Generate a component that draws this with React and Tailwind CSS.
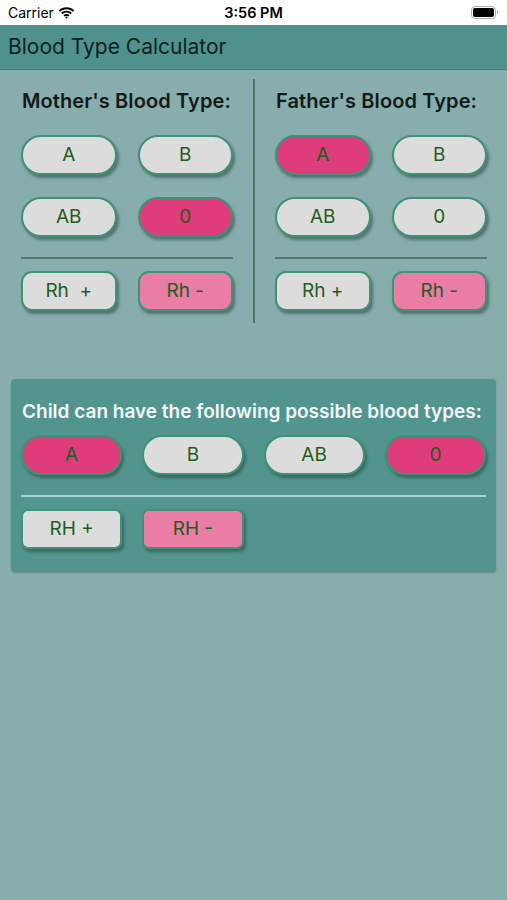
import React, { useState } from 'react';

const font = { fontFamily: 'Inter, "Liberation Sans", Arial, sans-serif' };

const Pill = ({ label, active, onClick, shape = 'pill', tone = 'strong' }) => {
  const radius = shape === 'pill' ? 'rounded-full' : shape === 'rh' ? 'rounded-[11px]' : 'rounded-[7px]';
  const bg = active ? (tone === 'strong' ? 'bg-[#de3c7b]' : 'bg-[#e97da6]') : 'bg-[#dcdcdc]';
  return (
    <button
      onClick={onClick}
      className={`h-10 w-full ${radius} ${bg} border-2 border-[#3f9274] text-[19px] text-[#1f5c1d] shadow-[2px_3px_3px_rgba(40,70,60,0.55)] flex items-center justify-center whitespace-pre`}
    >
      {label}
    </button>
  );
};

const ParentColumn = ({ title, blood, setBlood, rh, setRh, rhLabels }) => (
  <div className="w-[212px] flex flex-col">
    <div className="h-[65px] pt-[16px] text-[20px] font-semibold text-[#141a1a] whitespace-nowrap pl-[1px] tracking-[0.1px]">{title}</div>
    <div className="grid grid-cols-2 gap-x-[21px] gap-y-[22px]">
      {['A', 'B', 'AB', '0'].map((t) => (
        <Pill key={t} label={t} active={blood === t} onClick={() => setBlood(t)} />
      ))}
    </div>
    <div className="h-[2px] bg-[#4d7d6d] mt-5 mb-3" />
    <div className="grid grid-cols-2 gap-x-[21px]">
      <Pill label={rhLabels[0]} shape="rh" tone="light" active={rh === '+'} onClick={() => setRh('+')} />
      <Pill label={rhLabels[1]} shape="rh" tone="light" active={rh === '-'} onClick={() => setRh('-')} />
    </div>
  </div>
);

const App = () => {
  const [mother, setMother] = useState('0');
  const [father, setFather] = useState('A');
  const [motherRh, setMotherRh] = useState('-');
  const [fatherRh, setFatherRh] = useState('-');

  const childTypes = ['A', 'B', 'AB', '0'];
  const childActive = { A: true, B: false, AB: false, 0: true };

  return (
    <div style={font} className="w-[507px] h-[900px] bg-[#87adad] flex flex-col">
      {/* status bar */}
      <div className="h-[25px] bg-white flex items-center justify-between px-2 text-[14px] text-black relative">
        <div className="flex items-center gap-1">
          <span>Carrier</span>
          <svg width="17" height="12" viewBox="0 0 17 12">
            <path d="M8.5 2.2c2.5 0 4.8 1 6.5 2.6l1.3-1.4C14.2 1.4 11.5.2 8.5.2S2.8 1.4.7 3.4L2 4.8c1.7-1.6 4-2.6 6.5-2.6z" fill="#000" />
            <path d="M8.5 5.6c1.6 0 3 .6 4.1 1.6l1.3-1.4C12.5 4.5 10.6 3.7 8.5 3.7S4.5 4.5 3.1 5.8l1.3 1.4c1.1-1 2.5-1.6 4.1-1.6z" fill="#000" />
            <path d="M8.5 8.9c.7 0 1.3.3 1.8.7l1.3-1.4c-.8-.8-1.9-1.2-3.1-1.2s-2.3.4-3.1 1.2l1.3 1.4c.5-.4 1.1-.7 1.8-.7zM8.5 11.8l1.4-1.5c-.4-.3-.9-.5-1.4-.5s-1 .2-1.4.5z" fill="#000" />
          </svg>
        </div>
        <span className="absolute left-1/2 -translate-x-1/2 font-semibold text-[14.5px]">3:56 PM</span>
        <svg width="28" height="13" viewBox="0 0 28 13">
          <rect x="0.5" y="0.5" width="24" height="12" rx="3.5" fill="none" stroke="#aaa" />
          <rect x="2" y="2" width="21" height="9" rx="2" fill="#000" />
          <path d="M26 4.5v4c.8-.3 1.3-1.1 1.3-2s-.5-1.7-1.3-2z" fill="#aaa" />
        </svg>
      </div>

      {/* nav bar */}
      <div className="h-[45px] bg-[#4e918d] border-b border-[#3f7d79] flex items-center px-2 text-[21px] text-[#0f1f1f]">
        Blood Type Calculator
      </div>

      {/* parents */}
      <div className="flex items-start pl-[21px] pr-5">
        <ParentColumn title="Mother's Blood Type:" blood={mother} setBlood={setMother} rh={motherRh} setRh={setMotherRh} rhLabels={['Rh  +', 'Rh -']} />
        <div className="w-[2px] bg-[#4a7a62] mx-5 mt-[9px] h-[244px]" />
        <ParentColumn title="Father's Blood Type:" blood={father} setBlood={setFather} rh={fatherRh} setRh={setFatherRh} rhLabels={['Rh +', 'Rh -']} />
      </div>

      {/* child results */}
      <div className="mx-[11px] mt-[56px] rounded-[4px] bg-[#52958f] shadow-[0_1px_2px_rgba(0,0,0,0.2)] px-[10px] pt-[19px] pb-[23px]">
        <div className="text-[19px] font-semibold text-[#f2f7f7] whitespace-nowrap pl-[1px] h-[37px]">
          Child can have the following possible blood types:
        </div>
        <div className="grid grid-cols-4 gap-x-5">
          {childTypes.map((t) => (
            <Pill key={t} label={t} active={childActive[t]} />
          ))}
        </div>
        <div className="h-[2px] bg-[#a9d5d6] mt-5 mb-3" />
        <div className="grid grid-cols-4 gap-x-5">
          <Pill label="RH +" shape="box" active={false} />
          <Pill label="RH -" shape="box" tone="light" active />
        </div>
      </div>
    </div>
  );
};

export default App;
